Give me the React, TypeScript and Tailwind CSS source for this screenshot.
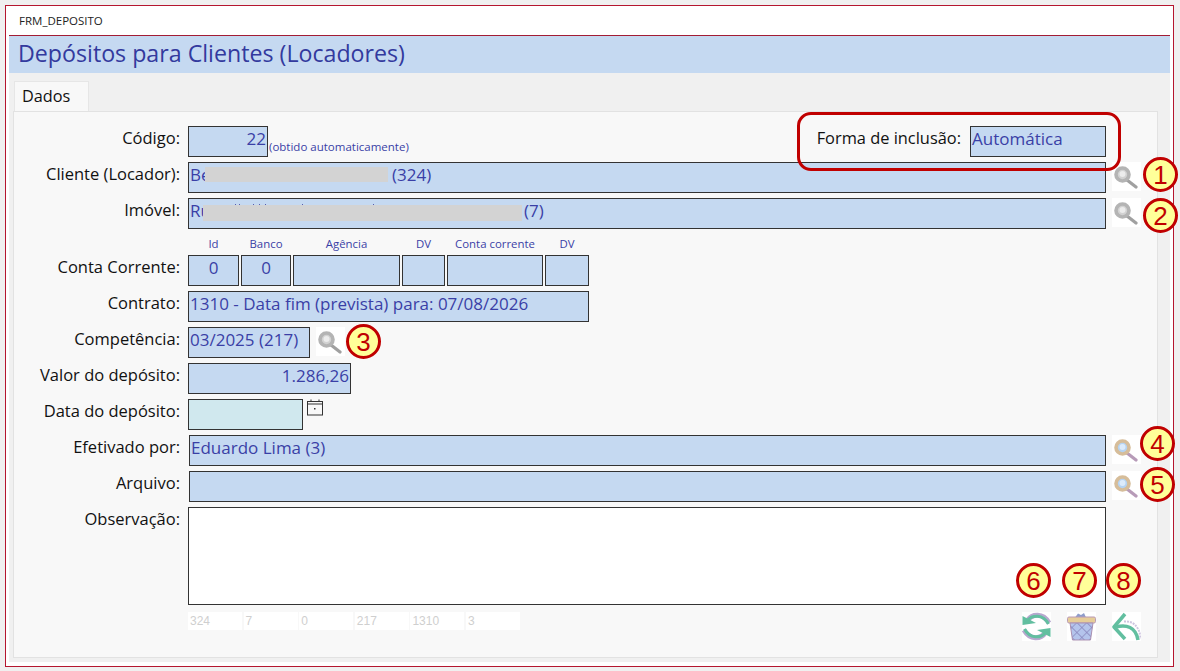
import type { ReactNode } from "react";

const fieldCls =
  "relative h-[31px] border border-[#333] bg-[#c5d9f1] text-[#3a3fa6] text-[17px] leading-[24px] px-[1px] whitespace-nowrap overflow-hidden";

function Label({ children }: { children: ReactNode }) {
  return <div className="w-[160px] shrink-0 pt-[1px] text-right text-[16.5px] leading-[22px] text-[#111]">{children}</div>;
}

function Row({ label, children }: { label: string; children: ReactNode }) {
  return (
    <div className="flex h-[31px] gap-[8px]">
      <Label>{label}</Label>
      {children}
    </div>
  );
}

function Badge({ n, className }: { n: number; className: string }) {
  return (
    <div
      className={`absolute flex h-[35px] w-[35px] items-center justify-center rounded-full border-[3px] border-[#c00000] bg-[#ffff99] text-[26px] leading-none text-[#c00000] ${className}`}
      style={{ fontFamily: "'Liberation Sans', Arial, sans-serif" }}
    >
      {n}
    </div>
  );
}

function Lens({ color = false }: { color?: boolean }) {
  return (
    <div className="ml-[-2px] h-[29px] w-[29px] shrink-0 bg-white">
      <svg width="29" height="29" viewBox="0 0 29 29" className="blur-[0.6px]">
        <line x1="15" y1="18" x2="24" y2="25" stroke={color ? "#b79bb8" : "#a0a0a0"} strokeWidth="3.2" strokeLinecap="round" />
        <circle cx="10.5" cy="12.5" r="6.5" fill={color ? "#b5d3f2" : "#d2d2d2"} stroke={color ? "#d6bd9a" : "#b4b4b4"} strokeWidth="3.6" />
        <circle cx="10.5" cy="12" r="3" fill={color ? "#dcebfb" : "#ececec"} />
      </svg>
    </div>
  );
}

function Calendar() {
  return (
    <svg width="18" height="18" viewBox="0 0 18 18" className="ml-[3px]" fill="none" stroke="#333" strokeWidth="1">
      <rect x="1.5" y="2.5" width="15" height="13.5" />
      <line x1="1.5" y1="5" x2="16.5" y2="5" />
      <line x1="5" y1="0.5" x2="5" y2="3" />
      <line x1="13" y1="0.5" x2="13" y2="3" />
      <rect x="8" y="9" width="1.5" height="1.5" fill="#333" stroke="none" />
    </svg>
  );
}

function Refresh() {
  return (
    <div className="h-[29px] w-[29px] bg-white">
      <svg width="29" height="29" viewBox="0 0 29 29" fill="none" className="blur-[0.4px]">
        <path d="M6 8 C10 2 21 0.5 27 11" stroke="#b8a8cf" strokeWidth="5" />
        <path d="M6 8 C10 3 21 1.5 26.5 12" stroke="#62bfa0" strokeWidth="3" />
        <path d="M0.5 4 L14 11 L0.5 13 Z" fill="#62bfa0" />
        <path d="M23 21 C19 27 8 28.5 2 18" stroke="#b8a8cf" strokeWidth="5" />
        <path d="M23 21 C19 26 8 27.5 2.5 17" stroke="#62bfa0" strokeWidth="3" />
        <path d="M28.5 16 L15 18 L28.5 25 Z" fill="#62bfa0" />
      </svg>
    </div>
  );
}

function Trash() {
  return (
    <div className="h-[29px] w-[29px] bg-white">
      <svg width="29" height="29" viewBox="0 0 29 29" className="blur-[0.4px]">
        <defs>
          <pattern id="mesh" width="7" height="7" patternUnits="userSpaceOnUse" patternTransform="rotate(45)">
            <rect width="7" height="7" fill="#b4c4ec" />
            <path d="M0 0H7M0 0V7" stroke="#8582ba" strokeWidth="1.3" />
          </pattern>
        </defs>
        <path d="M8 5.5 L11 1.5 L14 3 L17 1 L19 5.5 Z" fill="#8f9dcb" />
        <rect x="0.5" y="5" width="28" height="6" rx="1.5" fill="#e6cd98" stroke="#b99ab5" />
        <path d="M3 11 H26 L23.5 28 H5.5 Z" fill="url(#mesh)" stroke="#a98fb0" />
      </svg>
    </div>
  );
}

function Back() {
  return (
    <div className="h-[29px] w-[29px] bg-white">
      <svg width="29" height="29" viewBox="0 0 29 29" fill="none" className="blur-[0.4px]">
        <path d="M12 9.5 C20 8.5 28 14 28.5 27" stroke="#cfc6e0" strokeWidth="2" strokeDasharray="2 1" />
        <path d="M4 15 C14 12 24 15 26 28" stroke="#62bfa0" strokeWidth="3.5" />
        <path d="M13 2 L2 15 L13 27" stroke="#62bfa0" strokeWidth="3.5" strokeLinejoin="round" />
      </svg>
    </div>
  );
}

const contas = [
  { h: "Id", v: "0", w: "w-[51px]" },
  { h: "Banco", v: "0", w: "w-[50px]" },
  { h: "Agência", v: "", w: "w-[107px]" },
  { h: "DV", v: "", w: "w-[43px]" },
  { h: "Conta corrente", v: "", w: "w-[96px]" },
  { h: "DV", v: "", w: "w-[44px]" },
];

const ids = ["324", "7", "0", "217", "1310", "3"];

// pontas de letras que aparecem acima da tarja
const tips = ["left-[46px]", "left-[50px]", "left-[64px]", "left-[70px]", "left-[76px]", "left-[113px]", "left-[184px]"];

export default function App() {
  return (
    <div className="h-[671px] w-[1180px] overflow-hidden bg-[#f0f0f0] pt-[5px] pl-[5px]" style={{ fontFamily: "'Open Sans', 'Noto Sans', sans-serif" }}>
      <div className="flex h-[662px] w-[1169px] flex-col border border-[#b5162f] bg-white px-[3px]">
        <div className="h-[30px] shrink-0 border-b border-[#a31d35] pl-[10px] text-[11.5px] leading-[29px] text-[#222]">FRM_DEPOSITO</div>
        <div className="h-[37px] shrink-0 bg-[#c5d9f1] pl-[9px] text-[23.2px] leading-[34px] text-[#333a9e]">Depósitos para Clientes (Locadores)</div>
        <div className="relative h-[589px] shrink-0 bg-[#f0f0f0] px-[4px] pt-[8px]">
          <div className="ml-[1px] flex h-[30px] w-[75px] items-center border border-b-0 border-[#e6e6e6] bg-[#f8f8f8] pl-[7px] text-[16.3px] text-[#111]">Dados</div>
          <div className="relative h-[547px] w-[1145px] border border-[#e2e2e2] bg-[#f8f8f8] pt-[14px] pl-[6px]">
            <div className="flex flex-col gap-[5px]">
              <Row label="Código:">
                <div className={`${fieldCls} w-[80px] text-right`}>22</div>
                <div className="ml-[-7px] self-end pb-[3px] text-[11.5px] leading-[14px] text-[#3a3fa6]">(obtido automaticamente)</div>
                <div className="ml-auto flex gap-[9px] pr-[51px]">
                  <div className="pt-[1px] text-[16.4px] leading-[22px] text-[#111]">Forma de inclusão:</div>
                  <div className={`${fieldCls} w-[136px]`}>Automática</div>
                </div>
              </Row>
              <Row label="Cliente (Locador):">
                <div className={`${fieldCls} w-[918px]`}>
                  <span className="inline-block w-[202px]">Be</span>
                  <span>(324)</span>
                  <span className="absolute top-[4px] left-[16px] h-[15px] w-[183px] bg-[#d3d3d3]" />
                </div>
                <Lens />
              </Row>
              <Row label="Imóvel:">
                <div className={`${fieldCls} w-[918px]`}>
                  <span className="inline-block w-[334px]">Ru</span>
                  <span>(7)</span>
                  {tips.map((t) => (
                    <span key={t} className={`absolute top-[5px] h-[2px] w-[1px] bg-[#5a5fb0] ${t}`} />
                  ))}
                  <span className="absolute top-[6px] left-[14px] h-[16px] w-[319px] bg-[#d3d3d3]" />
                </div>
                <Lens />
              </Row>
              <div className="mt-[2px] mb-[-5px] flex flex-col">
                <div className="ml-[168px] flex h-[19px] gap-[2px]">
                  {contas.map((c, i) => (
                    <div key={i} className={`${c.w} text-center text-[11.4px] leading-[16px] whitespace-nowrap text-[#3a3fa6]`}>{c.h}</div>
                  ))}
                </div>
                <div className="flex h-[31px] gap-[8px]">
                  <Label>Conta Corrente:</Label>
                  <div className="flex gap-[2px]">
                    {contas.map((c, i) => (
                      <div key={i} className={`${fieldCls} ${c.w} text-center`}>{c.v}</div>
                    ))}
                  </div>
                </div>
              </div>
              <div className="mt-[5px]">
                <Row label="Contrato:">
                  <div className={`${fieldCls} w-[401px]`}>1310 - Data fim (prevista) para: 07/08/2026</div>
                </Row>
              </div>
              <Row label="Competência:">
                <div className={`${fieldCls} w-[122px]`}>03/2025 (217)</div>
                <Lens />
              </Row>
              <Row label="Valor do depósito:">
                <div className={`${fieldCls} w-[163px] text-right`}>1.286,26</div>
              </Row>
              <Row label="Data do depósito:">
                <div className={`${fieldCls} w-[115px] bg-[#d0e8ee]`} />
                <div className="ml-[-8px]"><Calendar /></div>
              </Row>
              <Row label="Efetivado por:">
                <div className={`${fieldCls} ml-[1px] w-[917px]`}>Eduardo Lima (3)</div>
                <Lens color />
              </Row>
              <Row label="Arquivo:">
                <div className={`${fieldCls} ml-[1px] w-[917px]`} />
                <Lens color />
              </Row>
              <div className="flex h-[98px] gap-[8px]">
                <Label>Observação:</Label>
                <div className="h-[98px] w-[918px] border border-[#333] bg-white" />
              </div>
            </div>
            <div className="mt-[7px] ml-[168px] flex items-start">
              <div className="flex gap-[1.6px]">
                {ids.map((id, i) => (
                  <div key={i} className="h-[18px] w-[54px] bg-white pl-[2px] text-[12px] leading-[18px] text-[#cfcfcf]" style={{ fontFamily: "'Liberation Sans', sans-serif" }}>
                    {id}
                  </div>
                ))}
              </div>
              <div className="ml-[502px] flex gap-[16px]">
                <Refresh />
                <Trash />
                <Back />
              </div>
            </div>
          </div>
          {/* destaques por cima do formulario */}
          <div className="absolute top-[39px] left-[788px] h-[59px] w-[324px] rounded-[14px] border-[3px] border-[#c00000]" />
          <Badge n={1} className="top-[84px] left-[1134px]" />
          <Badge n={2} className="top-[125px] left-[1134px]" />
          <Badge n={3} className="top-[251px] left-[337px]" />
          <Badge n={4} className="top-[353px] left-[1131px]" />
          <Badge n={5} className="top-[394px] left-[1131px]" />
          <Badge n={6} className="top-[490px] left-[1007px]" />
          <Badge n={7} className="top-[490px] left-[1053px]" />
          <Badge n={8} className="top-[490px] left-[1097px]" />
        </div>
      </div>
    </div>
  );
}
